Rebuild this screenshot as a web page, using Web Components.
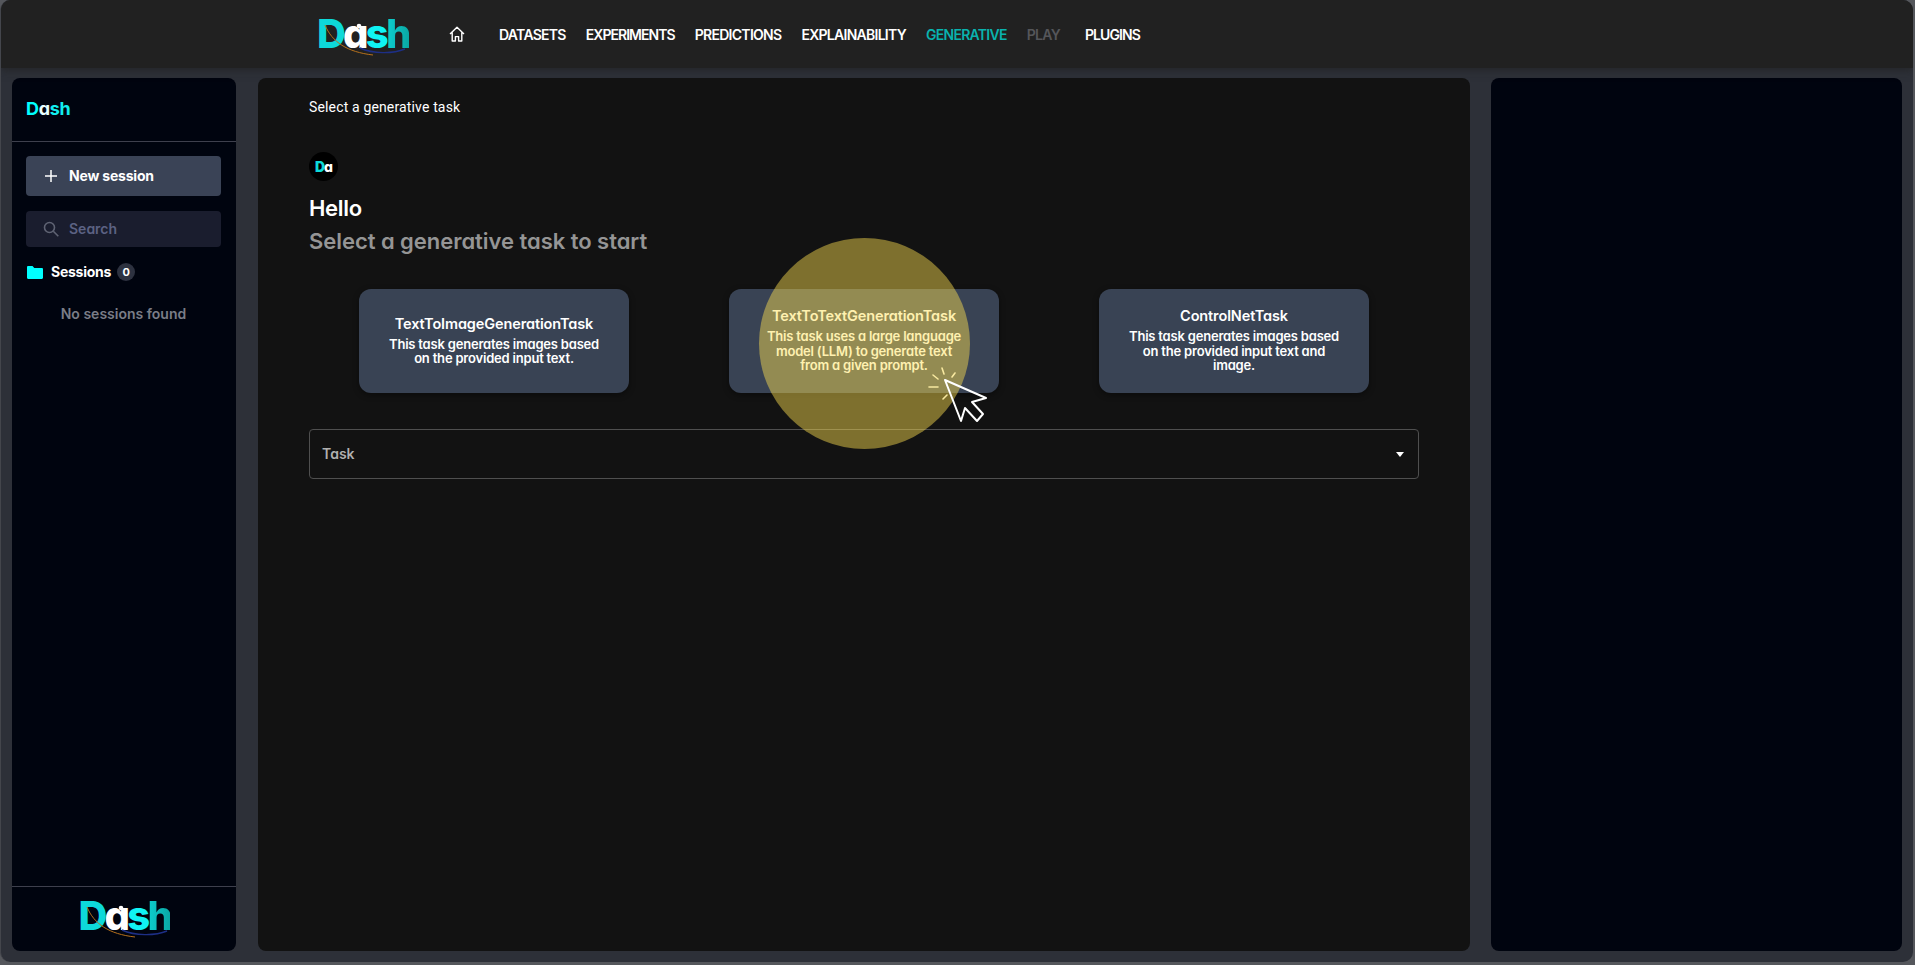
<!DOCTYPE html>
<html><head><meta charset="utf-8">
<style>
html,body{margin:0;height:100%;background:#55575c;overflow:hidden}
</style></head><body>
<app-shell></app-shell>
<script>
const FONT = `font-family:Inter,"Noto Sans",sans-serif;font-feature-settings:"cv11" 1;`;
function def(name, html){
  customElements.define(name, class extends HTMLElement{
    constructor(){super();this.attachShadow({mode:'open'}).innerHTML=html;}
  });
}
def('dash-logo',`<style>
:host{display:inline-block;position:relative;width:91px;height:40px;line-height:40px;font-family:Inter,sans-serif;font-feature-settings:"cv11" 1;font-weight:800;font-size:40px;letter-spacing:-.07em;white-space:nowrap}
.d{color:#0dd9d9}.a{color:#fff}.s{color:#10f4f4}.h{background:linear-gradient(90deg,#0dd0d0,#0aa8a4);-webkit-background-clip:text;background-clip:text;color:transparent}
svg{position:absolute;left:0;top:0;width:91px;height:48px;overflow:visible;pointer-events:none}
</style><span class="d">D</span><span class="a">a</span><span class="s">s</span><span class="h">h</span>
<svg viewBox="0 0 91 48" fill="none"><circle cx="42" cy="12" r="2.300" fill="#fff"/><path d="M8 11C15 28 30 38 56 41" stroke="#b5701c" stroke-width="1"/><path d="M43 34C56 40 76 40 88 35" stroke="#1d2f86" stroke-width="1.400"/></svg>`);

def('nav-item',`<style>
:host{display:block;font-size:14px;font-weight:600;color:var(--c,#fff);letter-spacing:var(--ls,-.72px);white-space:nowrap;${FONT}}
</style><slot></slot>`);

def('top-bar',`<style>
:host{display:flex;align-items:center;height:68px;padding-left:316px;background:#212121;box-sizing:border-box;flex:none;box-shadow:0 2px 8px rgba(33,33,33,.7);position:relative}
.home{margin:0 34px 0 41px;display:block;width:16px;height:16px}
nav{display:flex;gap:20px;align-items:center}
.play{--c:#55565a;margin-right:5px}.gen{--c:#09b3ae}.exp{--ls:-.95px}.plug{--ls:-.9px}
</style>
<dash-logo></dash-logo>
<svg class="home" viewBox="0 0 16 16" fill="none" stroke="#fff" stroke-width="1.400" stroke-linejoin="round"><path d="M1 8 8 1.200 15 8M3.200 6.600V15h3.200v-4.400h3.200V15h3.200V6.600"/></svg>
<nav><nav-item>DATASETS</nav-item><nav-item class="exp">EXPERIMENTS</nav-item><nav-item>PREDICTIONS</nav-item><nav-item>EXPLAINABILITY</nav-item><nav-item class="gen">GENERATIVE</nav-item><nav-item class="play">PLAY</nav-item><nav-item class="plug">PLUGINS</nav-item></nav>`);

def('side-bar',`<style>
:host{display:flex;flex-direction:column;width:224px;flex:none;background:#00040f;border-radius:8px;box-sizing:border-box;color:#fff;font-size:14px;margin-right:22px;${FONT}}
.brand{height:64px;flex:none;box-sizing:border-box;padding:19px 14px 0;border-bottom:1px solid #3e404d;font-size:18px;font-weight:700;letter-spacing:-.3px;line-height:24px;color:#12eeee}
.brand b{color:#0ff;font-weight:700}.brand i{color:#e8ffff;font-style:normal}
.body{flex:1;padding:14px 15px 0 14px}
.new{height:40px;box-sizing:border-box;padding:0 0 2px 18px;background:#3a4356;border-radius:4px;display:flex;align-items:center;gap:11px;font-weight:700;font-size:14px;letter-spacing:-.2px}
.new svg{margin-top:2px}
.search{height:36px;box-sizing:border-box;padding:0 0 2px 17px;margin-top:15px;background:#1a1d2e;border-radius:4px;display:flex;align-items:center;gap:10px;color:#5c6283;font-weight:600;font-size:14px}
.search svg{margin-top:1px}
.sess{display:flex;align-items:center;margin-top:14px;height:22px;box-sizing:border-box;padding:0 0 2px 1px;font-weight:700;letter-spacing:-.25px;font-size:14px}
.sess svg{margin:2px 8px 0 0}
.badge{margin:2px 0 0 6px;width:18px;height:18px;border-radius:50%;background:#2d3240;display:flex;align-items:center;justify-content:center;font-size:11px;font-weight:700}
.none{text-align:center;margin-top:20px;color:#7a7d87;font-weight:600;line-height:22px;font-size:14px}
.foot{height:65px;flex:none;border-top:1px solid #3e404d;display:flex;justify-content:center;padding-top:9px;box-sizing:border-box}
</style>
<div class="brand"><b>D</b><i>a</i>sh</div>
<div class="body">
<div class="new"><svg width="14" height="14" viewBox="0 0 14 14" stroke="#fff" stroke-width="1.500"><path d="M7 1v12M1 7h12"/></svg>New session</div>
<div class="search"><svg width="16" height="16" viewBox="0 0 16 16" fill="none" stroke="#5f6373" stroke-width="1.600"><circle cx="6.500" cy="6.500" r="5"/><path d="m10.300 10.300 5 5"/></svg>Search</div>
<div class="sess"><svg width="16" height="13" viewBox="0 0 16 13"><path fill="#0ff" d="M0 1.200C0 .5.5 0 1.200 0h4.300l1.800 2h7.500c.7 0 1.200.5 1.200 1.200v8.600c0 .7-.5 1.200-1.200 1.200H1.200C.5 13 0 12.500 0 11.800z"/></svg>Sessions<span class="badge">0</span></div>
<div class="none">No sessions found</div>
</div>
<div class="foot"><dash-logo></dash-logo></div>`);

def('task-card',`<style>
:host{display:flex;flex-direction:column;justify-content:center;align-items:center;text-align:center;width:270px;height:104px;box-sizing:border-box;padding:0 24px 4px;background:#394354;border-radius:12px;color:#fff;box-shadow:0 2px 6px rgba(0,0,0,.4);${FONT}}
h3{margin:0 0 3px;font-size:14.500px;line-height:21px;font-weight:600;letter-spacing:-.12px}
p{margin:0;font-size:13px;line-height:14.500px;font-weight:600;letter-spacing:-.2px}
</style><h3><slot name="t"></slot></h3><p><slot></slot></p>`);

def('task-select',`<style>
:host{display:flex;align-items:center;justify-content:space-between;height:50px;box-sizing:border-box;border:1px solid #4f4f4f;border-radius:4px;padding:0 14px 0 12px;color:#b0b0b0;font-size:14px;font-weight:600;margin-top:36px;${FONT}}
span{margin-top:-1px}
i{width:0;height:0;border:4.500px solid transparent;border-top:5px solid #fff;border-bottom:0;display:block}
</style><span>Task</span><i></i>`);

def('main-panel',`<style>
:host{display:block;flex:1;background:#121212;border-radius:8px;padding:19px 51px;box-sizing:border-box;color:#fff;position:relative;min-width:0;margin-right:21px}
.crumb{font:14px/20px Roboto,sans-serif;letter-spacing:.15px}
.avatar{width:29px;height:29px;border-radius:50%;background:#000;margin-top:35px;display:flex;align-items:center;justify-content:center;font:800 14px/1 Inter,sans-serif;font-feature-settings:"cv11" 1;letter-spacing:-1px;color:#fff}
.avatar b{color:#0dd9d9}
h1{margin:11px 0 0;font:600 22px/32px Inter,sans-serif;font-feature-settings:"cv11" 1;letter-spacing:-.3px}
h2{margin:1px 0 0;font:600 22px/32px Inter,sans-serif;font-feature-settings:"cv11" 1;color:#959595;letter-spacing:-.04px}
.cards{display:flex;justify-content:center;gap:100px;margin-top:32px}
.spot{position:absolute;left:501px;top:160px;width:211px;height:211px;border-radius:50%;background:rgba(255,224,80,.46);pointer-events:none}
.cursor{position:absolute;left:669px;top:290px;width:66px;height:66px;overflow:visible}
</style>
<div class="crumb">Select a generative task</div>
<div class="avatar"><b>D</b>a</div>
<h1>Hello</h1>
<h2>Select a generative task to start</h2>
<div class="cards">
<task-card><span slot="t">TextToImageGenerationTask</span>This task generates images based on the provided input text.</task-card>
<task-card><span slot="t">TextToTextGenerationTask</span>This task uses a large language<br>model (LLM) to generate text<br>from a given prompt.</task-card>
<task-card><span slot="t">ControlNetTask</span>This task generates images based on the provided input text and image.</task-card>
</div>
<task-select></task-select>
<div class="spot"></div>
<svg class="cursor" viewBox="0 0 66 66" fill="none">
<path d="M18 12 59 30 45 34 56 46 50 53 38 40 34 53Z" stroke="#fff" stroke-width="2" stroke-linejoin="round"/>
<path d="M2 19H11M6 7l5 4M15 0l2 6M28 5l-3 4M20 27l-4 4" stroke="#f8e9a0" stroke-width="1.600" stroke-linecap="round"/>
</svg>`);

def('app-shell',`<style>
:host{display:flex;flex-direction:column;height:962px;width:1913px;background:#2d3038;border-radius:10px;overflow:hidden;box-sizing:border-box;border-left:1px solid #44464c}
.row{flex:1;display:flex;padding:10px 11px 11px 11px;min-height:0}
.right{width:411px;flex:none;background:#00040f;border-radius:8px}
</style><top-bar></top-bar><div class="row"><side-bar></side-bar><main-panel></main-panel><div class="right"></div></div>`);
</script>
</body></html>
